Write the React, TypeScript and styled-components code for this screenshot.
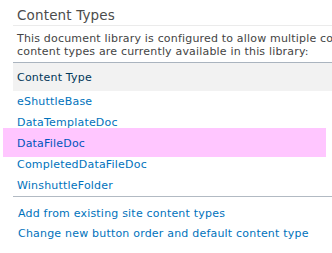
import React from "react";
import styled, { createGlobalStyle } from "styled-components";

// Library settings: content types section

const GlobalStyle = createGlobalStyle`
  html, body {
    margin: 0;
    padding: 0;
    background: #fff;
  }
  body {
    font-family: "DejaVu Sans", Verdana, sans-serif;
    overflow: hidden;
  }
`;

const Page = styled.div`
  width: 332px;
  height: 253px;
  overflow: hidden;
`;

const Section = styled.section`
  width: 560px;
  padding-left: 13px;
`;

const Heading = styled.h2`
  margin: 0;
  padding: 7px 0 1px 4px;
  font-size: 13.5px;
  font-weight: normal;
  letter-spacing: 0.15px;
  line-height: 17px;
  color: #4c4c4c;
  border-bottom: 1px solid #ebebeb;
`;

const Description = styled.p`
  margin: 6px 0 0;
  padding-left: 4px;
  font-size: 11px;
  letter-spacing: 0.18px;
  line-height: 13px;
  color: #444;
  white-space: nowrap;
`;

const Table = styled.div`
  margin-top: 4px;
  border-top: 1px solid #aab4bf;
`;

const HeaderRow = styled.div`
  background: #f2f2f2;
  padding: 1px 0 0 4px;
  font-size: 11px;
  letter-spacing: 0.2px;
  line-height: 27px;
  color: #003759;
`;

const Row = styled.div<{ $marked?: boolean }>`
  position: relative;
  isolation: isolate;
  padding-left: 4px;
  font-size: 11px;
  letter-spacing: 0.2px;
  line-height: 21px;

  ${({ $marked }) =>
    $marked &&
    `
    &::before {
      content: "";
      position: absolute;
      left: -10px;
      top: -5px;
      bottom: -3px;
      width: 323px;
      background: #ffc6ff;
      z-index: -1;
    }
  `}
`;

const ItemLink = styled.a<{ $marked?: boolean }>`
  color: ${({ $marked }) => ($marked ? "#0055bc" : "#0072bc")};
  text-decoration: none;
`;

const Actions = styled.div`
  border-top: 1px solid #b2bac3;
  padding: 7px 0 0 5px;
`;

const ActionLink = styled.a`
  display: block;
  font-size: 11px;
  letter-spacing: 0.2px;
  line-height: 20px;
  color: #0072bc;
  text-decoration: none;
`;

const contentTypes = [
  "eShuttleBase",
  "DataTemplateDoc",
  "DataFileDoc",
  "CompletedDataFileDoc",
  "WinshuttleFolder",
];

function App() {
  return (
    <>
      <GlobalStyle />
      <Page>
        <Section>
          <Heading>Content Types</Heading>
          <Description>
            This document library is configured to allow multiple content types. The following
            <br />
            content types are currently available in this library:
          </Description>
          <Table>
            <HeaderRow>Content Type</HeaderRow>
            {contentTypes.map((name) => (
              <Row key={name} $marked={name === "DataFileDoc"}>
                <ItemLink href="#" $marked={name === "DataFileDoc"}>
                  {name}
                </ItemLink>
              </Row>
            ))}
          </Table>
          <Actions>
            <ActionLink href="#">Add from existing site content types</ActionLink>
            <ActionLink href="#">Change new button order and default content type</ActionLink>
          </Actions>
        </Section>
      </Page>
    </>
  );
}

export default App;
